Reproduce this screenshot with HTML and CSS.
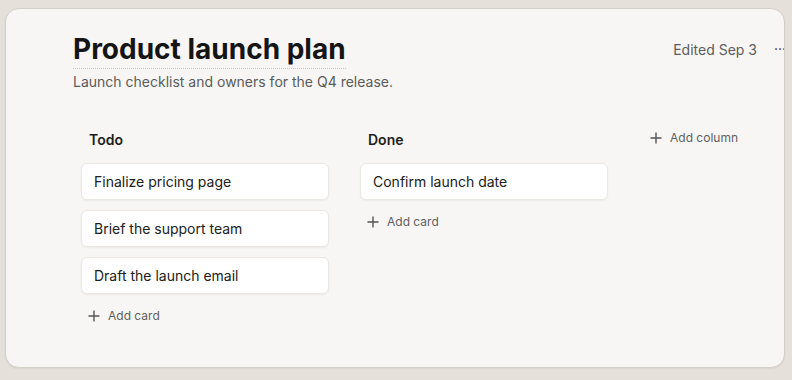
FILE: index.html
```html
<!DOCTYPE html>
<html lang="en">
<head>
<meta charset="utf-8">
<title>Product launch plan</title>
<link rel="stylesheet" href="styles.css">
</head>
<body>
<main class="panel">
  <header class="page-head">
    <div class="titles">
      <h1 class="title">Product launch plan</h1>
      <p class="subtitle">Launch checklist and owners for the Q4 release.</p>
    </div>
    <div class="meta">
      <span class="edited">Edited Sep 3</span>
      <button class="more" type="button" aria-label="More">···</button>
    </div>
  </header>
  <section class="board">
    <div class="column">
      <h2 class="col-title">Todo</h2>
      <div class="cards">
        <div class="card">Finalize pricing page</div>
        <div class="card">Brief the support team</div>
        <div class="card">Draft the launch email</div>
      </div>
      <button class="add" type="button"><svg class="plus" viewBox="0 0 12 12" width="12" height="12"><path d="M6 0.5v11M0.5 6h11" stroke="currentColor" stroke-width="1.4" fill="none"/></svg><span>Add card</span></button>
    </div>
    <div class="column">
      <h2 class="col-title">Done</h2>
      <div class="cards">
        <div class="card">Confirm launch date</div>
      </div>
      <button class="add" type="button"><svg class="plus" viewBox="0 0 12 12" width="12" height="12"><path d="M6 0.5v11M0.5 6h11" stroke="currentColor" stroke-width="1.4" fill="none"/></svg><span>Add card</span></button>
    </div>
    <div class="add-col-wrap">
      <button class="add add-column" type="button"><svg class="plus" viewBox="0 0 12 12" width="12" height="12"><path d="M6 0.5v11M0.5 6h11" stroke="currentColor" stroke-width="1.4" fill="none"/></svg><span>Add column</span></button>
    </div>
  </section>
</main>
</body>
</html>
```

FILE: styles.css
```css
* { box-sizing: border-box; }
html, body { margin: 0; height: 100%; }
body {
  background: #e5e0da;
  padding: 8px 7px 0 5px;
  font-family: Inter, "Noto Sans", "Liberation Sans", sans-serif;
  color: #1c1c1c;
  overflow: hidden;
}
.panel {
  height: 360px;
  background: #f7f6f4;
  border: 1px solid #d3cec8;
  border-radius: 14px;
  overflow: hidden;
  padding: 0 0 0 67px;
  box-shadow: 0 1px 2px rgba(0,0,0,0.06);
}
.page-head {
  display: flex;
  justify-content: space-between;
  align-items: flex-start;
  padding-top: 22px;
  margin-right: -14px;
}
.title {
  margin: 0;
  font-size: 28px;
  line-height: 36px;
  font-weight: 700;
  letter-spacing: 0;
  color: #151515;
  display: inline-block;
  border-bottom: 1px dotted #c9c6c1;
  padding-bottom: 1px;
}
.subtitle {
  margin: 3px 0 0;
  font-size: 14px;
  line-height: 20px;
  color: #5b5b5b;
}
.meta {
  display: flex;
  align-items: center;
  gap: 17px;
  padding-top: 8px;
}
.edited {
  font-size: 14px;
  color: #5d5d5d;
}
.more {
  border: 0;
  background: none;
  padding: 0;
  width: 24px;
  font-size: 14px;
  color: #333;
  font-family: inherit;
  text-align: left;
  line-height: 20px;
}
.board {
  display: flex;
  gap: 31px;
  margin-top: 38px;
  margin-left: 8px;
}
.column {
  width: 248px;
  display: flex;
  flex-direction: column;
}
.col-title {
  margin: 0 0 0 8px;
  font-size: 14px;
  line-height: 20px;
  font-weight: 600;
  color: #1d1d1d;
}
.cards {
  display: flex;
  flex-direction: column;
  gap: 10px;
  margin-top: 13px;
}
.card {
  height: 37px;
  display: flex;
  align-items: center;
  padding: 0 12px;
  background: #ffffff;
  border: 1px solid #ebe8e4;
  border-radius: 6px;
  box-shadow: 0 1px 2px rgba(0,0,0,0.05);
  font-size: 14px;
  color: #202020;
}
.add {
  display: flex;
  align-items: center;
  gap: 8px;
  border: 0;
  background: none;
  padding: 0 0 0 7px;
  margin-top: 14px;
  font-family: inherit;
  font-size: 12px;
  color: #5f5f5f;
  line-height: 16px;
  cursor: pointer;
}
.plus { color: #555; flex: none; }
.add-col-wrap { padding-left: 11px; }
.add-column { margin-top: 0; padding-left: 0; }
```
